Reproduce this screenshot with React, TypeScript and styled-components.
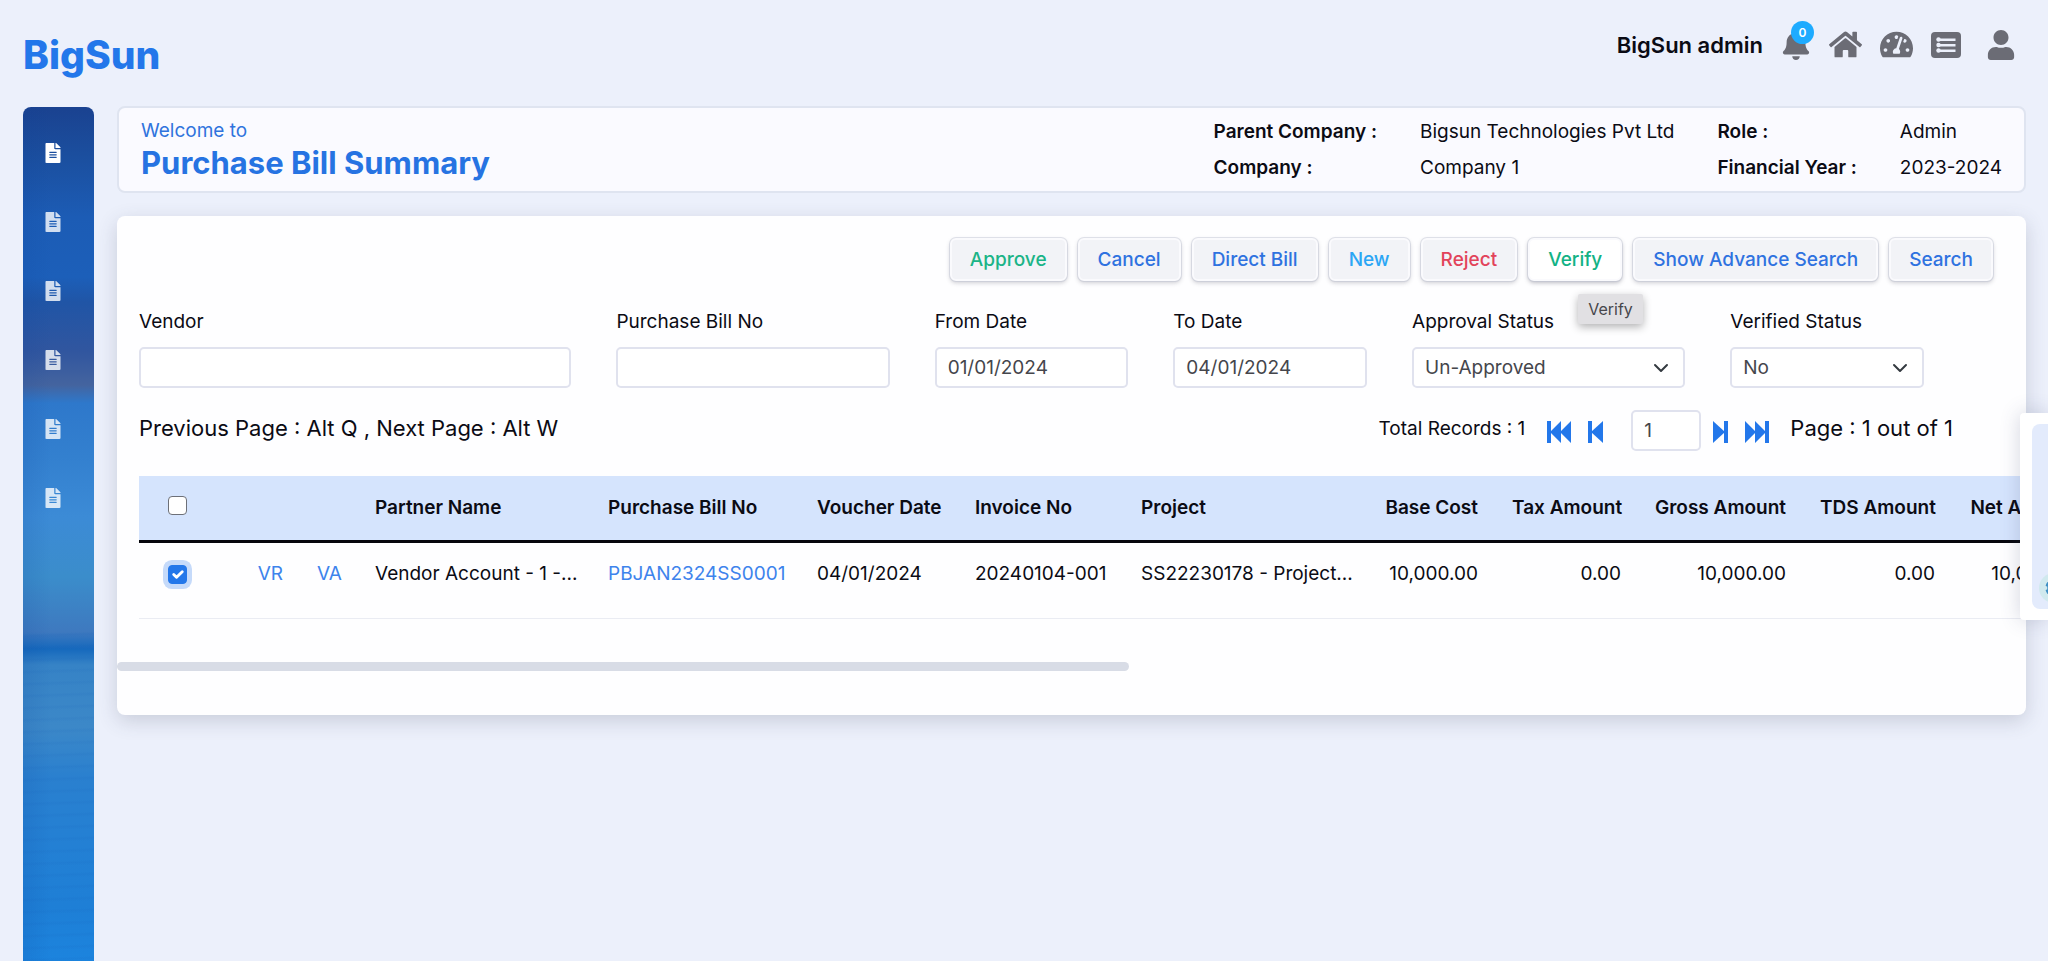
import React from "react";
import styled, { createGlobalStyle, css } from "styled-components";
import { FaBell, FaHome, FaTachometerAlt, FaUser, FaFileAlt, FaCog } from "react-icons/fa";

const GlobalStyle = createGlobalStyle`
  *, *::before, *::after { box-sizing: border-box; }
  body {
    margin: 0;
    background: #ecf0fb;
    color: #0b0b14;
    font-family: Inter, "Liberation Sans", sans-serif;
    font-size: 19px;
    line-height: 24px;
    overflow-x: hidden;
  }
  button, input, select { font: inherit; }
  a { text-decoration: none; }
`;

const Page = styled.div`
  min-height: 100vh;
  display: flex;
  flex-direction: column;
  overflow: hidden;
`;

const TopBar = styled.header`
  display: flex;
  justify-content: space-between;
  align-items: center;
  height: 106px;
  padding: 0 32px 0 23px;
`;

const Brand = styled.a`
  color: #2377ea;
  font-size: 39px;
  line-height: 48px;
  font-weight: 800;
  padding-top: 4px;
`;

const UserArea = styled.nav`
  display: flex;
  align-items: center;
  gap: 18px;
  padding-bottom: 17px;
`;

const UserName = styled.span`
  font-size: 22px;
  font-weight: 600;
`;

const IconLink = styled.a<{ $gap?: number }>`
  position: relative;
  display: flex;
  color: #6b6c75;
  margin-left: ${(p) => p.$gap ?? 0}px;
`;

const Badge = styled.span`
  position: absolute;
  top: -9px;
  right: -3px;
  width: 23px;
  height: 23px;
  border-radius: 50%;
  background: #1eabff;
  color: #fff;
  font-size: 12px;
  line-height: 23px;
  font-weight: 600;
  text-align: center;
`;

const Body = styled.div`
  flex: 1;
  display: flex;
  gap: 23px;
  padding: 0 22px 0 23px;
`;

const Sidebar = styled.nav`
  flex: none;
  width: 71px;
  margin-top: 1px;
  padding: 36px 11px 0 0;
  display: flex;
  flex-direction: column;
  align-items: center;
  gap: 49px;
  border-radius: 8px 8px 0 0;
  background:
    repeating-linear-gradient(178deg, transparent 0 7px, rgba(20, 90, 180, 0.09) 9px, transparent 12px) 0 520px / 100% 340px no-repeat,
    linear-gradient(90deg, rgba(10, 60, 150, 0.12), transparent 40%),
    linear-gradient(#1a4290 0px, #1b4f9f 50px, #1c5cb5 110px, #1c5fb9 170px, #2055a6 195px, #31569f 245px,
      #44649f 278px, #2e78cb 296px, #3380cf 350px, #3c8bd6 410px, #3b8dcb 470px, #3e79bf 525px, #1669bd 542px,
      #3683c6 558px, #3c88c8 620px, #2a80cf 670px, #2380d4 740px, #1e7fd6 800px, #1c84de 855px);
`;

const SideLink = styled.a<{ $active?: boolean }>`
  display: flex;
  color: #fff;
  opacity: ${(p) => (p.$active ? 1 : 0.8)};
`;

const Main = styled.main`
  flex: 1;
  min-width: 0;
`;

const TitleCard = styled.section`
  display: flex;
  justify-content: space-between;
  align-items: center;
  height: 87px;
  padding: 0 22px;
  background: #fafaff;
  border: 2px solid #dfe4f0;
  border-radius: 8px;
`;

const Heading = styled.div`
  padding-bottom: 2px;
`;

const Welcome = styled.p`
  margin: 0;
  color: #2f73dd;
  line-height: 28px;
`;

const Title = styled.h1`
  margin: 0;
  color: #2673e2;
  font-size: 31px;
  line-height: 36px;
  font-weight: 700;
`;

const Facts = styled.dl`
  display: grid;
  grid-template-columns: repeat(4, auto);
  column-gap: 43px;
  row-gap: 12px;
  margin: 0;
`;

const Term = styled.dt`
  font-weight: 600;
`;

const Fact = styled.dd`
  margin: 0;
`;

const Card = styled.section`
  margin-top: 23px;
  padding: 22px 0 44px;
  background: #fefeff;
  border-radius: 8px;
  box-shadow: 0 6px 20px rgba(60, 65, 90, 0.2);
`;

const Toolbar = styled.div`
  display: flex;
  justify-content: flex-end;
  gap: 11px;
  padding-right: 33px;
`;

const ButtonWrap = styled.div`
  position: relative;
`;

const ToolButton = styled.button<{ $color: string; $hover?: boolean }>`
  height: 43px;
  padding: 0 18px;
  border: 2px solid #fafafd;
  border-radius: 6px;
  background: ${(p) => (p.$hover ? "#fff" : "#f2f3f7")};
  color: ${(p) => p.$color};
  font-weight: 500;
  box-shadow: 0 0 0 1px rgba(190, 195, 210, 0.45), 0 2px 4px rgba(60, 60, 80, ${(p) => (p.$hover ? 0.35 : 0.25)});
`;

const Tip = styled.span`
  position: absolute;
  z-index: 2;
  top: 56px;
  left: 50px;
  padding: 3px 10px;
  background: #e1e0e3;
  color: #47474b;
  font-size: 16px;
  border-radius: 2px;
  box-shadow: 0 3px 8px rgba(0, 0, 0, 0.3);
`;

const Filters = styled.form`
  display: grid;
  grid-template-columns: 6fr 4fr 3fr 3fr 4fr 3fr;
  padding: 29px 57px 0 22px;
`;

const Field = styled.div`
  display: flex;
  flex-direction: column;
  gap: 13px;
  padding-right: 45px;
`;

const control = css`
  width: 100%;
  height: 41px;
  padding: 0 11px;
  border: 2px solid #e0e2ee;
  border-radius: 5px;
  background-color: #fff;
  color: #45464c;
`;

const Input = styled.input`
  ${control}
`;

const Select = styled.select`
  ${control}
  appearance: none;
  background-image: url("data:image/svg+xml,%3Csvg xmlns='http://www.w3.org/2000/svg' viewBox='0 0 16 16'%3E%3Cpath fill='none' stroke='%23343a40' stroke-width='2' stroke-linecap='round' stroke-linejoin='round' d='m2 5 6 6 6-6'/%3E%3C/svg%3E");
  background-repeat: no-repeat;
  background-position: right 14px center;
  background-size: 16px 16px;
`;

const PagerRow = styled.div`
  display: flex;
  justify-content: space-between;
  align-items: center;
  padding: 22px 73px 0 22px;
`;

const Total = styled.span`
  padding-bottom: 4px;
`;

const Hint = styled(Total)`
  font-size: 22px;
  padding-bottom: 6px;
`;

const Pager = styled.div`
  display: flex;
  align-items: center;
`;

const PageButton = styled.button<{ $gap: number }>`
  display: flex;
  padding: 3px 0 0;
  border: 0;
  background: none;
  color: #2377ea;
  margin-left: ${(p) => p.$gap}px;
`;

const PageInput = styled(Input)`
  width: 70px;
  margin-left: 28px;
`;

const PageCount = styled(Hint)`
  margin-left: 21px;
`;

const Scroller = styled.div`
  margin: 25px 0 0;
  padding-left: 22px;
  overflow: hidden;
`;

const Table = styled.table`
  table-layout: fixed;
  width: 2120px;
  border-collapse: collapse;
`;

const HeadRow = styled.tr`
  height: 65px;
  background: #d5e4fd;
  border-bottom: 3px solid #05060c;
`;

const Row = styled.tr`
  height: 77px;
  border-bottom: 1px solid #eaecf3;
`;

const cell = css<{ $right?: boolean }>`
  padding: 0 17px;
  text-align: ${(p) => (p.$right ? "right" : "left")};
  white-space: nowrap;
`;

const Th = styled.th<{ $right?: boolean }>`
  ${cell}
  font-weight: 600;
`;

const Td = styled.td<{ $right?: boolean }>`
  ${cell}
  padding-bottom: 12px;
`;

const CheckCell = styled.div<{ $head?: boolean }>`
  display: flex;
  justify-content: center;
  padding-bottom: ${(p) => (p.$head ? 4 : 0)}px;
`;

const Check = styled.input`
  appearance: none;
  display: block;
  width: 19px;
  height: 19px;
  margin: 0;
  border: 1px solid #6d7078;
  border-radius: 4px;
  background: #fff;
  &:checked {
    border-color: #2377ea;
    background: #2377ea url("data:image/svg+xml,%3Csvg xmlns='http://www.w3.org/2000/svg' viewBox='0 0 20 20'%3E%3Cpath fill='none' stroke='%23fff' stroke-width='3' stroke-linecap='round' stroke-linejoin='round' d='m6 10 3 3 6-6'/%3E%3C/svg%3E") center / 19px no-repeat;
    box-shadow: 0 0 0 5px #c5dafa;
  }
`;

const CellLink = styled.a`
  color: #3d83ec;
`;

const ScrollTrack = styled.div`
  margin-top: 43px;
  height: 9px;
`;

const ScrollThumb = styled.div`
  width: 53%;
  height: 100%;
  border-radius: 5px;
  background: #d8dce6;
`;

const Dock = styled.aside`
  position: fixed;
  z-index: 3;
  right: 0;
  top: 413px;
  width: 28px;
  height: 207px;
  padding: 11px 0 11px 12px;
  background: #fff;
  border-radius: 4px 0 0 4px;
  box-shadow: 0 0 20px rgba(60, 70, 110, 0.22);
  overflow: hidden;
`;

const DockPanel = styled.div`
  display: flex;
  align-items: flex-end;
  height: 100%;
  padding: 0 0 6px 7px;
  background: #e3ebfc;
  border-radius: 8px 0 0 8px;
`;

const DockButton = styled.a`
  flex: none;
  display: grid;
  place-items: center;
  width: 30px;
  height: 30px;
  border-radius: 50%;
  background: #d0e9ee;
  color: #3f8fc4;
`;

const tools = [
  { label: "Approve", color: "#1bb487" },
  { label: "Cancel", color: "#2f72e0" },
  { label: "Direct Bill", color: "#2f72e0" },
  { label: "New", color: "#2ba6f5" },
  { label: "Reject", color: "#e2435a" },
  { label: "Verify", color: "#12b285", hover: true },
  { label: "Show Advance Search", color: "#2f72e0" },
  { label: "Search", color: "#2f72e0" },
];

const columnWidths = [76, 85, 58, 233, 209, 158, 166, 238, 133, 143, 165, 149, 145];

const ListIcon = () => (
  <svg width="30" height="26" viewBox="0 0 30 26" aria-hidden="true">
    <rect width="30" height="26" rx="4" fill="currentColor" />
    <g fill="#ecf0fb">
      <circle cx="7.500" cy="7.500" r="2.200" />
      <circle cx="7.500" cy="13" r="2.200" />
      <circle cx="7.500" cy="18.500" r="2.200" />
      <rect x="7" y="6.500" width="17.500" height="2.500" />
      <rect x="7" y="12" width="17.500" height="2.500" />
      <rect x="7" y="17.500" width="17.500" height="2.500" />
    </g>
  </svg>
);

const StepIcon = ({ double, flip }: { double?: boolean; flip?: boolean }) => {
  const w = double ? 24 : 15;
  return (
    <svg width={w} height="22" viewBox={`0 0 ${w} 22`} aria-hidden="true">
      <g fill="currentColor" transform={flip ? `matrix(-1 0 0 1 ${w} 0)` : undefined}>
        <rect width="4" height="22" />
        <path d={double ? "M3 11 14 0V22Z M13 11 24 0V22Z" : "M3 11 15 0V22Z"} />
      </g>
    </svg>
  );
};

export default function App() {
  return (
    <Page>
      <GlobalStyle />
      <TopBar>
        <Brand href="#">BigSun</Brand>
        <UserArea aria-label="Account">
          <UserName>BigSun admin</UserName>
          <IconLink href="#" aria-label="Notifications">
            <FaBell size={30} />
            <Badge>0</Badge>
          </IconLink>
          <IconLink href="#" aria-label="Home"><FaHome size={33} /></IconLink>
          <IconLink href="#" aria-label="Dashboard"><FaTachometerAlt size={33} /></IconLink>
          <IconLink href="#" aria-label="Lists"><ListIcon /></IconLink>
          <IconLink href="#" aria-label="Profile" $gap={7}><FaUser size={30} /></IconLink>
        </UserArea>
      </TopBar>
      <Body>
        <Sidebar aria-label="Modules">
          {[0, 1, 2, 3, 4, 5].map((i) => (
            <SideLink key={i} href="#" $active={i === 0} aria-label={`Module ${i + 1}`}>
              <FaFileAlt size={20} />
            </SideLink>
          ))}
        </Sidebar>
        <Main>
          <TitleCard>
            <Heading>
              <Welcome>Welcome to</Welcome>
              <Title>Purchase Bill Summary</Title>
            </Heading>
            <Facts>
              <Term>Parent Company :</Term>
              <Fact>Bigsun Technologies Pvt Ltd</Fact>
              <Term>Role :</Term>
              <Fact>Admin</Fact>
              <Term>Company :</Term>
              <Fact>Company 1</Fact>
              <Term>Financial Year :</Term>
              <Fact>2023-2024</Fact>
            </Facts>
          </TitleCard>
          <Card>
            <Toolbar>
              {tools.map((t) => (
                <ButtonWrap key={t.label}>
                  <ToolButton type="button" $color={t.color} $hover={t.hover}>{t.label}</ToolButton>
                  {t.hover && <Tip role="tooltip">{t.label}</Tip>}
                </ButtonWrap>
              ))}
            </Toolbar>
            <Filters>
              <Field><label htmlFor="vendor">Vendor</label><Input id="vendor" /></Field>
              <Field><label htmlFor="bill">Purchase Bill No</label><Input id="bill" /></Field>
              <Field><label htmlFor="from">From Date</label><Input id="from" defaultValue="01/01/2024" /></Field>
              <Field><label htmlFor="to">To Date</label><Input id="to" defaultValue="04/01/2024" /></Field>
              <Field>
                <label htmlFor="approval">Approval Status</label>
                <Select id="approval"><option>Un-Approved</option></Select>
              </Field>
              <Field>
                <label htmlFor="verified">Verified Status</label>
                <Select id="verified"><option>No</option></Select>
              </Field>
            </Filters>
            <PagerRow>
              <Hint>Previous Page : Alt Q , Next Page : Alt W</Hint>
              <Pager>
                <Total>Total Records : 1</Total>
                <PageButton type="button" aria-label="First page" $gap={22}><StepIcon double /></PageButton>
                <PageButton type="button" aria-label="Previous page" $gap={17}><StepIcon /></PageButton>
                <PageInput aria-label="Page number" defaultValue="1" />
                <PageButton type="button" aria-label="Next page" $gap={12}><StepIcon flip /></PageButton>
                <PageButton type="button" aria-label="Last page" $gap={17}><StepIcon double flip /></PageButton>
                <PageCount>Page : 1 out of 1</PageCount>
              </Pager>
            </PagerRow>
            <Scroller>
              <Table>
                <colgroup>
                  {columnWidths.map((w, i) => <col key={i} width={w} />)}
                  <col />
                </colgroup>
                <thead>
                  <HeadRow>
                    <Th><CheckCell $head><Check type="checkbox" aria-label="Select all" /></CheckCell></Th>
                    <Th />
                    <Th />
                    <Th>Partner Name</Th>
                    <Th>Purchase Bill No</Th>
                    <Th>Voucher Date</Th>
                    <Th>Invoice No</Th>
                    <Th>Project</Th>
                    <Th $right>Base Cost</Th>
                    <Th $right>Tax Amount</Th>
                    <Th $right>Gross Amount</Th>
                    <Th $right>TDS Amount</Th>
                    <Th $right>Net Amount</Th>
                    <Th />
                  </HeadRow>
                </thead>
                <tbody>
                  <Row>
                    <Td><CheckCell><Check type="checkbox" aria-label="Select PBJAN2324SS0001" defaultChecked /></CheckCell></Td>
                    <Td $right><CellLink href="#">VR</CellLink></Td>
                    <Td $right><CellLink href="#">VA</CellLink></Td>
                    <Td>Vendor Account - 1 -...</Td>
                    <Td><CellLink href="#">PBJAN2324SS0001</CellLink></Td>
                    <Td>04/01/2024</Td>
                    <Td>20240104-001</Td>
                    <Td>SS22230178 - Project...</Td>
                    <Td $right>10,000.00</Td>
                    <Td $right>0.00</Td>
                    <Td $right>10,000.00</Td>
                    <Td $right>0.00</Td>
                    <Td $right>10,000.00</Td>
                    <Td />
                  </Row>
                </tbody>
              </Table>
            </Scroller>
            <ScrollTrack><ScrollThumb /></ScrollTrack>
          </Card>
        </Main>
      </Body>
      <Dock aria-label="Quick settings">
        <DockPanel>
          <DockButton href="#" aria-label="Settings"><FaCog size={18} /></DockButton>
        </DockPanel>
      </Dock>
    </Page>
  );
}
